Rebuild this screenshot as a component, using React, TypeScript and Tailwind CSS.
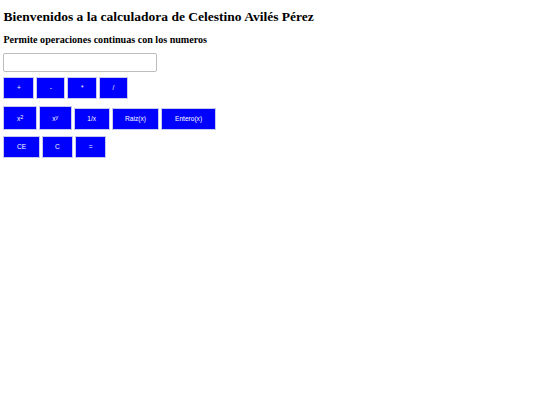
import React from 'react'

const btn =
  'bg-[#0000ff] text-white border border-[#c8c8f0] px-[12.5px] pb-[6px] text-[6.6px] leading-[8px] [font-family:"Liberation_Sans",Arial,sans-serif]'

function Key({ children, tall }: { children: React.ReactNode; tall?: boolean }) {
  return <button className={`${btn} ${tall ? 'pt-[8px]' : 'pt-[6px]'}`}>{children}</button>
}

export default function App() {
  return (
    <div className="min-h-screen bg-white p-[3.4px] text-black [font-family:'Liberation_Serif','Times_New_Roman',serif]">
      <h1 className="mt-[5.5px] mb-0 text-[13.5px] leading-[16px] font-bold">
        Bienvenidos a la calculadora de Celestino Avilés Pérez
      </h1>
      <h2 className="mt-[9px] text-[10.1px] leading-[12px] font-bold">
        Permite operaciones continuas con los numeros
      </h2>
      <input
        type="text"
        className="mt-[7px] block h-[19px] w-[154px] rounded-[2px] border border-[#bdbdbd] bg-white"
      />
      <div className="mt-[5px] flex items-end gap-[2px]">
        <Key>+</Key>
        <Key>-</Key>
        <Key>*</Key>
        <Key>/</Key>
      </div>
      <div className="mt-[7px] flex items-end gap-[2px]">
        <Key tall>
          x<sup className="relative -top-[1.5px] text-[5.5px]">2</sup>
        </Key>
        <Key tall>
          x<sup className="relative -top-[1.5px] text-[5.5px]">y</sup>
        </Key>
        <Key>1/x</Key>
        <Key>Raiz(x)</Key>
        <Key>Entero(x)</Key>
      </div>
      <div className="mt-[6px] flex items-end gap-[2px]">
        <Key>CE</Key>
        <Key>C</Key>
        <Key>=</Key>
      </div>
    </div>
  )
}
